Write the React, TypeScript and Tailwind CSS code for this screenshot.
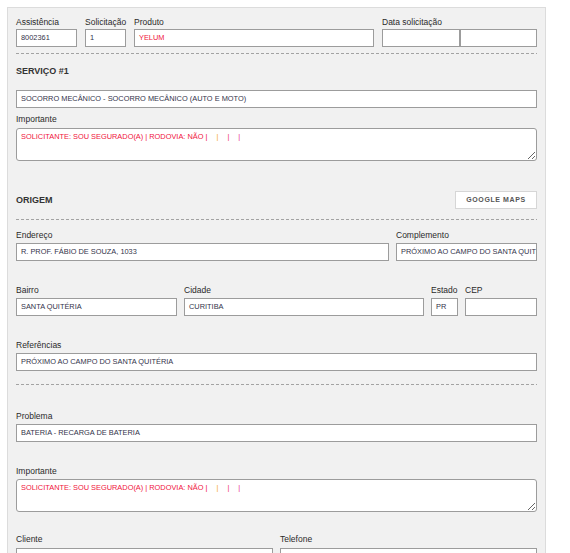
import type { ReactNode } from "react";

// common bits
const labelCls = "text-[8.5px] leading-[11px] text-[#2a2a2a] whitespace-nowrap";
const boxCls =
  "h-[18px] border border-[#9c9c9c] bg-white px-[4px] text-[7.4px] leading-[16px] text-[#33334a] whitespace-nowrap overflow-hidden";

function Label({ children, className = "" }: { children: ReactNode; className?: string }) {
  return <div className={`${labelCls} ${className}`}>{children}</div>;
}

function Box({ children, className = "" }: { children?: ReactNode; className?: string }) {
  return <div className={`${boxCls} ${className}`}>{children}</div>;
}

function Dashed({ className = "" }: { className?: string }) {
  return (
    <div
      className={`h-px bg-[repeating-linear-gradient(to_right,#a3a3a3_0_3px,transparent_3px_5px)] ${className}`}
    />
  );
}

function Importante() {
  return (
    <div className="relative h-[33px] resize overflow-auto rounded-[3px] border border-[#9c9c9c] bg-white px-[4px] pt-[3px] text-[7.4px] leading-[10px] text-[#f0143c] whitespace-nowrap">
      SOLICITANTE: SOU SEGURADO(A) | RODOVIA: NÃO |
      <span className="ml-[9px] text-[#f5a623]">|</span>
      <span className="ml-[9px] text-[#f0346a]">|</span>
      <span className="ml-[9px] text-[#e8258a]">|</span>
    </div>
  );
}

export default function App() {
  return (
    <div className="min-h-[553px] bg-white pt-[7px] pl-[7px] font-['Liberation_Sans',Arial,sans-serif]">
      <div className="w-[539px] border border-[#dcdcdc] bg-[#f1f1f1] px-[8px] pt-[9px] pb-[20px]">
        {/* cabeçalho */}
        <div className="flex gap-[8px]">
          <div className="w-[61px]">
            <Label className="mb-[1px]">Assistência</Label>
            <Box>8002361</Box>
          </div>
          <div className="w-[41px]">
            <Label className="mb-[1px]">Solicitação</Label>
            <Box>1</Box>
          </div>
          <div className="flex-1">
            <Label className="mb-[1px]">Produto</Label>
            <Box className="text-[#f0143c]">YELUM</Box>
          </div>
          <div className="w-[155px]">
            <Label className="mb-[1px]">Data solicitação</Label>
            <div className="flex">
              <Box className="w-[78px]" />
              <Box className="flex-1" />
            </div>
          </div>
        </div>

        <Dashed className="mt-[6px]" />

        {/* serviço */}
        <div className="mt-[11px] text-[9px] leading-[12px] font-bold text-[#333]">SERVIÇO #1</div>
        <Box className="mt-[13px]">SOCORRO MECÂNICO - SOCORRO MECÂNICO (AUTO E MOTO)</Box>

        <Label className="mt-[6px] mb-[3px]">Importante</Label>
        <Importante />

        {/* origem */}
        <div className="mt-[30px] flex h-[18px] items-center justify-between">
          <div className="text-[9px] leading-[12px] font-bold text-[#333]">ORIGEM</div>
          <button
            type="button"
            className="flex h-[18px] w-[82px] items-center justify-center border border-[#d6d6d6] bg-white text-[7px] font-bold tracking-[0.6px] text-[#555]"
          >
            GOOGLE MAPS
          </button>
        </div>

        <Dashed className="mt-[10px]" />

        <div className="mt-[10px] flex gap-[7px]">
          <div className="flex-1">
            <Label className="mb-[2px]">Endereço</Label>
            <Box>R. PROF. FÁBIO DE SOUZA, 1033</Box>
          </div>
          <div className="w-[141px]">
            <Label className="mb-[2px]">Complemento</Label>
            <Box>PRÓXIMO AO CAMPO DO SANTA QUITÉRIA</Box>
          </div>
        </div>

        <div className="mt-[24px] flex gap-[7px]">
          <div className="w-[161px]">
            <Label className="mb-[2px]">Bairro</Label>
            <Box>SANTA QUITÉRIA</Box>
          </div>
          <div className="w-[240px]">
            <Label className="mb-[2px]">Cidade</Label>
            <Box>CURITIBA</Box>
          </div>
          <div className="w-[27px]">
            <Label className="mb-[2px]">Estado</Label>
            <Box>PR</Box>
          </div>
          <div className="flex-1">
            <Label className="mb-[2px]">CEP</Label>
            <Box />
          </div>
        </div>

        <Label className="mt-[24px] mb-[2px]">Referências</Label>
        <Box>PRÓXIMO AO CAMPO DO SANTA QUITÉRIA</Box>

        <Dashed className="mt-[13px]" />

        {/* problema */}
        <Label className="mt-[26px] mb-[2px]">Problema</Label>
        <Box>BATERIA - RECARGA DE BATERIA</Box>

        <Label className="mt-[24px] mb-[2px]">Importante</Label>
        <Importante />

        <div className="mt-[22px] grid grid-cols-2 gap-[7px]">
          <div>
            <Label className="mb-[3px]">Cliente</Label>
            <Box />
          </div>
          <div>
            <Label className="mb-[3px]">Telefone</Label>
            <Box />
          </div>
        </div>
      </div>
    </div>
  );
}
